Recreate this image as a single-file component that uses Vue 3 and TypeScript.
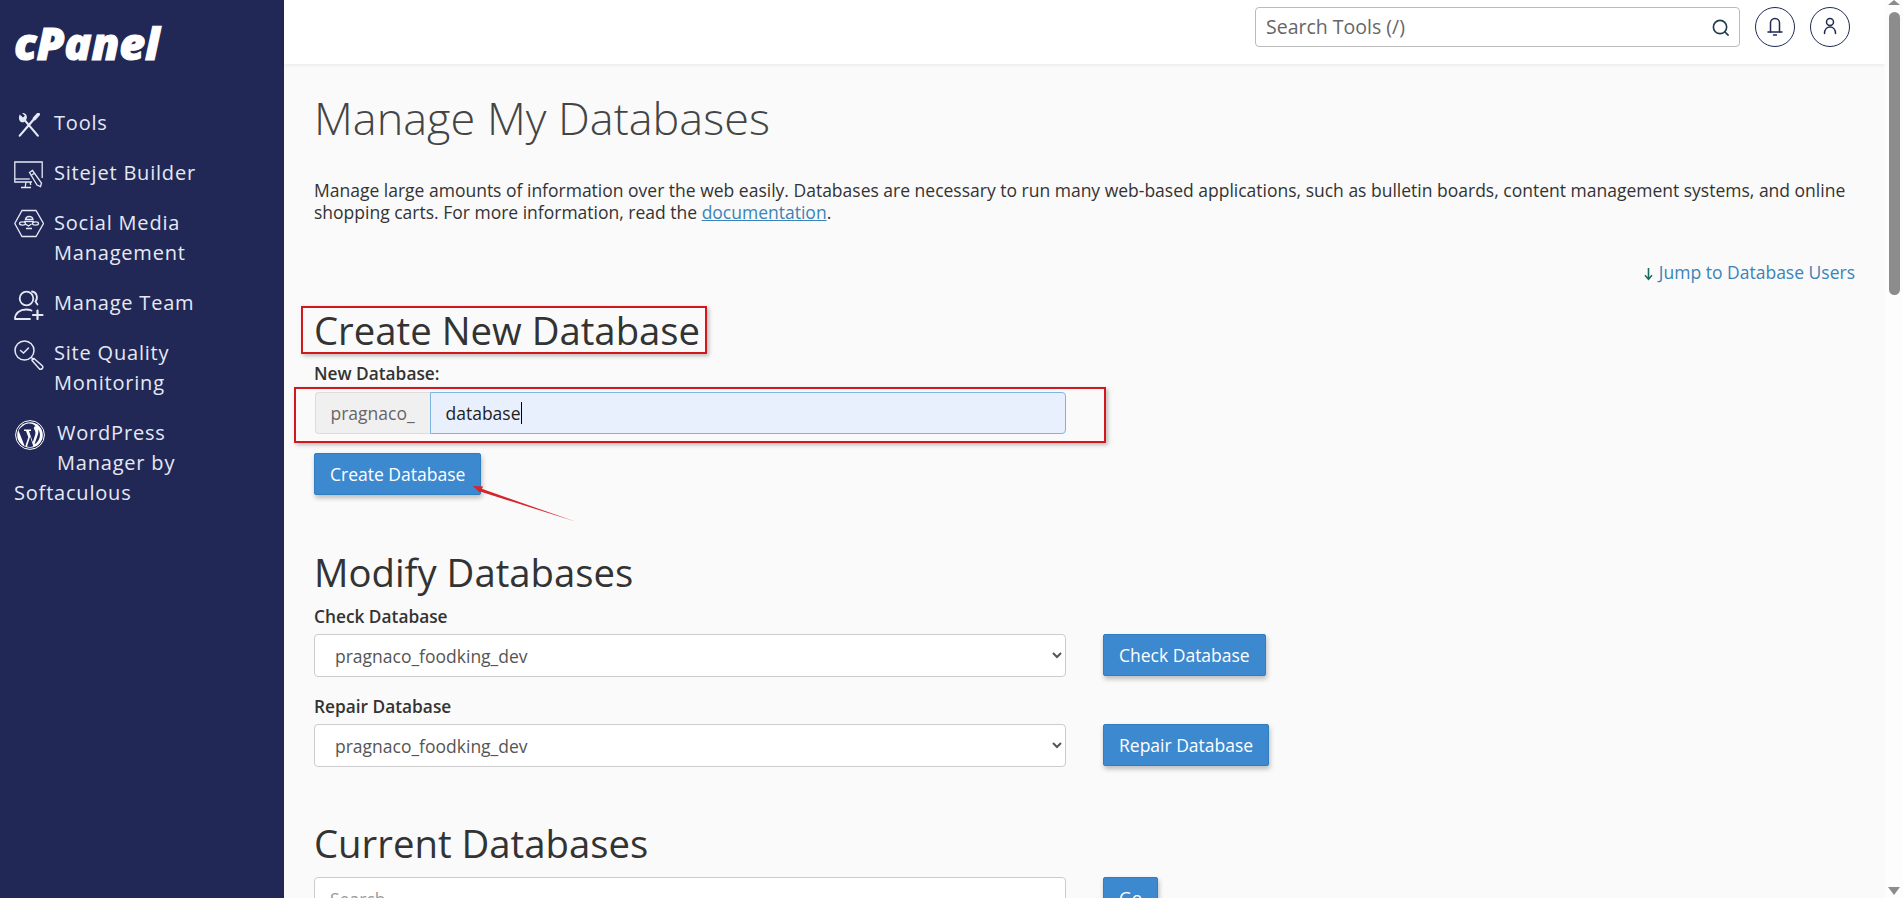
<script setup lang="ts">
interface NavItem {
  id: string
  label: string
}

const navItems: NavItem[] = [
  { id: 'tools', label: 'Tools' },
  { id: 'sitejet', label: 'Sitejet Builder' },
  { id: 'social', label: 'Social Media Management' },
  { id: 'team', label: 'Manage Team' },
  { id: 'quality', label: 'Site Quality Monitoring' },
  { id: 'wp', label: 'WordPress Manager by Softaculous' },
]

const dbOptions = ['pragnaco_foodking_dev']
</script>

<template>
  <div class="page">
    <aside class="sidebar">
      <div class="logo">cPanel</div>
      <nav class="nav">
        <a v-for="item in navItems" :key="item.id" class="nav-item" :class="`nav-${item.id}`" href="#">
          <span class="nav-icon">
            <svg v-if="item.id === 'tools'" viewBox="4 3 23 26" fill="none" stroke="#e6e9f4" stroke-width="2.400" stroke-linecap="round">
              <path fill="#e6e9f4" stroke="none" d="M5.500 4.500 9 8l2-2-3-3c3-.5 6 2 5 6l-1 2-2 2c-4 1-7-3-4.500-8.500z" />
              <path d="M11 11 25 27.500" />
              <path d="M25.500 4.500 21.500 9" stroke-width="3.800" />
              <path d="M21 9.500 5.500 27.500" />
            </svg>
            <svg v-else-if="item.id === 'sitejet'" viewBox="0 0 30 30" fill="none" stroke="#e6e9f4" stroke-width="1.300">
              <path d="M18 21H.8V1h27.400v16" />
              <path d="M.8 18h15" />
              <path d="M12 21l-.8 5M7 26.500h10M16 21l.8 3" />
              <path d="M15.500 11.500l3-2 9 12.500-1 3.500-3.500-1.500z" />
              <path d="M17 14.500l3-2" />
            </svg>
            <svg v-else-if="item.id === 'social'" viewBox="0 0 30 30" fill="none" stroke="#e6e9f4" stroke-width="1.300">
              <path d="M8 1.500h14L29.500 14.500 22 27.500H8L.8 14.500z" />
              <path d="M11.500 10.500c.5-4 7-4 7.500 0z" />
              <path d="M10 12.500h10" />
              <ellipse cx="8.500" cy="14.500" rx="3" ry="1.600" />
              <ellipse cx="21.500" cy="14.500" rx="3" ry="1.600" />
              <path d="M11.500 15l3 2 3-2M12 19.500h6" />
            </svg>
            <svg v-else-if="item.id === 'team'" viewBox="0 0 30 30" fill="none" stroke="#e6e9f4" stroke-width="1.800" stroke-linecap="round">
              <circle cx="12.500" cy="8.500" r="6.800" />
              <path d="M18 1.500c4.500.5 6.500 6 3.500 10l2 3" />
              <path d="M1 29c0-6 5-9.500 11-9.500 2 0 4 .3 5.500 1M1 29h15" />
              <path d="M23.500 20.500v8.500M19 25h9.500" stroke-width="2.200" />
            </svg>
            <svg v-else-if="item.id === 'quality'" viewBox="0 0 30 30" fill="none" stroke="#e6e9f4" stroke-width="1.500" stroke-linecap="round">
              <circle cx="10.500" cy="10.500" r="9.500" />
              <path d="M6.500 10.500l3 2.500 5-5" />
              <path d="M17.500 17.500l2 2" />
              <path d="M20 18.500l8.500 7.500a2.200 2.200 0 0 1-3 3l-7.500-8.500a2 2 0 0 1 2-2z" />
            </svg>
            <svg v-else viewBox="0 0 30 30">
              <circle cx="15" cy="15" r="14.400" fill="none" stroke="#fff" stroke-width="1" />
              <circle cx="15" cy="15" r="12.800" fill="#fff" />
              <path fill="#21285a" d="M3.500 10.500 10 27l3.300-9.800-2.300-6.300H9V9.500h7v1.400h-2l3.800 11.300 2.500-8c.7-2.400-.8-4.300-1.300-5.400-.4-1 .2-2.400 1.600-2.500C18.800 3.500 13 2 8.500 5.500 6 7.200 4.600 9 3.500 10.500z" />
              <path fill="#21285a" d="M15.200 16.500 12 26.500c1.900.6 4.300.6 6.300-.2zM23.300 9.500c.6 3.500-1 6.500-1.800 9l-2 5.800C24 21.800 27 15 23.300 9.500z" />
            </svg>
          </span>
          <span class="nav-label">{{ item.label }}</span>
        </a>
      </nav>
    </aside>

    <div class="main">
      <header class="topbar">
        <div class="search">
          <span class="search-text">Search Tools (/)</span>
          <svg class="search-icon" viewBox="0 0 20 20" fill="none" stroke="#1f3a4d" stroke-width="1.700" stroke-linecap="round">
            <circle cx="9.500" cy="9.500" r="7" />
            <path d="M14.500 14.500l3.500 3.500" />
          </svg>
        </div>
        <button class="round-btn" type="button" aria-label="Notifications">
          <svg viewBox="0 0 20 20" fill="none" stroke="#1f2a55" stroke-width="1.500" stroke-linecap="round">
            <path d="M5.500 15V6a4.500 4.500 0 0 1 9 0v9" />
            <path d="M3 15h14M8.500 18h3" />
          </svg>
        </button>
        <button class="round-btn" type="button" aria-label="Account">
          <svg viewBox="0 0 20 20" fill="none" stroke="#1f2a55" stroke-width="1.500" stroke-linecap="round">
            <circle cx="10" cy="5" r="3.500" />
            <path d="M4.500 16.500c0-4 2.500-6.500 5.500-6.500s5.500 2.500 5.500 6.500" />
          </svg>
        </button>
      </header>

      <main class="content">
        <h1 class="page-title">Manage My Databases</h1>
        <p class="intro">
          Manage large amounts of information over the web easily. Databases are necessary to run many web-based applications, such as bulletin boards, content management systems, and online shopping carts. For more information, read the
          <a href="#" class="doc-link">documentation</a>.
        </p>
        <div class="jump-row">
          <a href="#" class="jump-link">
            <svg class="jump-arrow" viewBox="0 0 12 16" fill="none" stroke="#1c6b62" stroke-width="1.800">
              <path d="M6 1v13M2 9.500 6 14l4-4.500" />
            </svg>
            Jump to Database Users
          </a>
        </div>

        <section class="create">
          <h2 class="section-title create-title"><span class="mark-title">Create New Database</span></h2>
          <label class="field-label">New Database:</label>
          <div class="mark-group">
            <div class="input-group">
              <span class="addon">pragnaco_</span>
              <div class="db-input"><span>database</span><i class="caret" /></div>
            </div>
          </div>
          <div class="arrow-wrap">
            <button class="btn" type="button">Create Database</button>
            <svg class="red-arrow" viewBox="0 0 110 40" fill="none">
              <path d="M9 3.500 8 6.500l101 32z" fill="#d8232a" />
              <path d="M1 1l11 .5-3.500 6.500z" fill="#d8232a" />
            </svg>
          </div>
        </section>

        <section class="modify">
          <h2 class="section-title">Modify Databases</h2>
          <label class="field-label check-label">Check Database</label>
          <div class="select-row">
            <select class="select">
              <option v-for="o in dbOptions" :key="o">{{ o }}</option>
            </select>
            <button class="btn" type="button">Check Database</button>
          </div>
          <label class="field-label repair-label">Repair Database</label>
          <div class="select-row">
            <select class="select">
              <option v-for="o in dbOptions" :key="o">{{ o }}</option>
            </select>
            <button class="btn" type="button">Repair Database</button>
          </div>
        </section>

        <section class="current">
          <h2 class="section-title">Current Databases</h2>
          <div class="select-row">
            <input class="search-db" type="text" placeholder="Search">
            <button class="btn" type="button">Go</button>
          </div>
        </section>
      </main>
    </div>

    <div class="scrollbar">
      <span class="arrow-up" />
      <span class="thumb" />
      <span class="arrow-down" />
    </div>
  </div>
</template>

<style>
html,
body {
  margin: 0;
  height: 100%;
  overflow: hidden;
}
</style>

<style scoped>
.page {
  display: flex;
  height: 898px;
  overflow: hidden;
  font-family: 'Open Sans', 'Liberation Sans', sans-serif;
  color: #333;
  background: #fafafa;
}

.sidebar {
  flex: 0 0 284px;
  padding: 0 40px 0 14px;
  box-sizing: border-box;
  background: #212856;
}

.logo {
  height: 44px;
  margin-top: 21px;
  font: italic 800 45px/44px 'Open Sans', sans-serif;
  letter-spacing: -0.200px;
  color: #fff;
  -webkit-text-stroke: 1px #fff;
}

.nav {
  display: flex;
  flex-direction: column;
  gap: 20px;
  margin-top: 43px;
}

.nav-item {
  display: block;
  font-size: 20px;
  line-height: 30px;
  letter-spacing: 0.800px;
  color: #e6e9f4;
  text-decoration: none;
}

.nav-icon {
  float: left;
  width: 40px;
  height: 30px;
}

.nav-icon svg {
  display: block;
  width: 30px;
  height: 30px;
}

.nav-tools .nav-icon svg {
  width: 22px;
  height: 24px;
  margin: 5px 0 0 4px;
}

.nav-social .nav-icon,
.nav-quality .nav-icon {
  height: 60px;
}

.nav-wp .nav-icon {
  width: 43px;
  height: 54px;
}

.nav-wp .nav-icon svg {
  margin: 2px 0 0 1px;
}

.nav-quality .nav-icon svg,
.nav-team .nav-icon svg {
  margin-top: 2px;
}

.nav-sitejet .nav-icon svg {
  margin-top: 3px;
}

.nav-social .nav-icon svg {
  margin-top: 1px;
}

.main {
  flex: 1;
  min-width: 0;
  display: flex;
  flex-direction: column;
}

.topbar {
  position: relative;
  flex: 0 0 64px;
  display: flex;
  align-items: flex-start;
  padding: 7px 35px 0 0;
  box-sizing: border-box;
  justify-content: flex-end;
  background: #fff;
  box-shadow: 0 1px 4px rgba(0, 0, 0, 0.08);
}

.search {
  width: 485px;
  height: 40px;
  box-sizing: border-box;
  display: flex;
  align-items: center;
  justify-content: space-between;
  padding: 0 9px 2px 10px;
  margin-right: 15px;
  border: 1px solid #bbb;
  border-radius: 4px;
}

.search-text {
  font-size: 19.500px;
  color: #666;
}

.search-icon {
  width: 19px;
  height: 19px;
  margin-top: 2px;
}

.round-btn {
  width: 40px;
  height: 40px;
  margin-left: 15px;
  padding: 9px;
  box-sizing: border-box;
  border: 1px solid #1f2a55;
  border-radius: 50%;
  background: #fff;
}

.round-btn:first-of-type {
  margin-left: 0;
}

.round-btn svg {
  display: block;
  width: 20px;
  height: 20px;
}

.content {
  flex: 1;
  padding: 0 30px;
  overflow: hidden;
}

.page-title {
  margin: 26px 0 0;
  font-size: 45px;
  font-weight: 300;
  line-height: 56px;
  color: #444;
}

.intro {
  margin: 33px 0 0;
  font-size: 17.500px;
  line-height: 22px;
  color: #333;
}

.doc-link,
.jump-link {
  color: #3b83b8;
}

.jump-row {
  margin-top: 37px;
  display: flex;
  justify-content: flex-end;
}

.jump-link {
  display: flex;
  align-items: center;
  gap: 5px;
  font-size: 17.500px;
  line-height: 24px;
  text-decoration: none;
}

.jump-arrow {
  width: 11px;
  height: 14px;
  margin-top: 3px;
}

.create {
  margin-top: 20px;
}

.section-title {
  margin: 0;
  font-size: 38.300px;
  font-weight: 400;
  line-height: 48px;
  color: #333;
}

.create-title {
  display: flex;
  height: 52px;
  align-items: center;
}

.mark-title {
  margin-left: -13px;
  padding: 0 5px 0 11px;
  line-height: 44px;
  border: 2.500px solid #d2171f;
  box-shadow: 2px 2px 4px rgba(0, 0, 0, 0.25);
}

.field-label {
  display: block;
  margin-top: 6px;
  font-size: 17.300px;
  font-weight: 600;
  line-height: 24px;
  color: #333;
}

.mark-group {
  width: 812px;
  height: 56px;
  margin: 1px 0 0 -20px;
  padding: 3px 0 0 18.500px;
  box-sizing: border-box;
  border: 2.500px solid #d2171f;
  box-shadow: 2px 2px 4px rgba(0, 0, 0, 0.25);
}

.input-group {
  display: flex;
  width: 751px;
  height: 42px;
}

.addon {
  flex: 0 0 115px;
  box-sizing: border-box;
  padding-left: 15px;
  border: 1px solid #ddd;
  border-right: 0;
  border-radius: 4px 0 0 4px;
  font-size: 17.500px;
  line-height: 40px;
  color: #666;
  background: #f0f0f0;
}

.db-input {
  flex: 1;
  display: flex;
  align-items: center;
  padding-left: 15px;
  border: 1px solid #7db5e0;
  border-radius: 0 4px 4px 0;
  font-size: 17.500px;
  color: #222;
  background: #e8f0fe;
}

.caret {
  width: 1px;
  height: 22px;
  background: #000;
}

.arrow-wrap {
  position: relative;
  margin-top: 10px;
}

.red-arrow {
  position: absolute;
  left: 157px;
  top: 32px;
  width: 106px;
  height: 38px;
  overflow: visible;
}

.btn {
  height: 42px;
  padding: 0 15px;
  border: 1px solid #2f7fc0;
  border-radius: 2px;
  font-family: inherit;
  font-size: 17.500px;
  color: #fff;
  background: #3c89cf;
  box-shadow: 1px 3px 5px rgba(0, 0, 0, 0.25);
}

.modify {
  margin-top: 53px;
}

.check-label {
  margin-top: 9px;
}

.repair-label {
  margin-top: 18px;
}

.select-row {
  display: flex;
  align-items: flex-start;
  gap: 37px;
  margin-top: 5px;
}

.select {
  width: 752px;
  height: 43px;
  box-sizing: border-box;
  padding-left: 16px;
  border: 1px solid #ccc;
  border-radius: 4px;
  font-family: inherit;
  font-size: 17.500px;
  color: #555;
  background: #fff;
}

.current {
  margin-top: 52px;
}

.current .select-row {
  margin-top: 10px;
}

.search-db {
  width: 752px;
  height: 43px;
  box-sizing: border-box;
  padding-left: 15px;
  border: 1px solid #ccc;
  border-radius: 4px;
  font-family: inherit;
  font-size: 17.500px;
  background: #fff;
}

.search-db::placeholder {
  color: #999;
}

.scrollbar {
  position: relative;
  flex: 0 0 18px;
  background: #fdfdfd;
}

.thumb {
  position: absolute;
  top: 12px;
  left: 4px;
  width: 11px;
  height: 283px;
  border-radius: 6px;
  background: #8c8c8c;
}

.arrow-up,
.arrow-down {
  position: absolute;
  left: 3px;
  width: 0;
  height: 0;
  border-left: 6.500px solid transparent;
  border-right: 6.500px solid transparent;
}

.arrow-up {
  top: 0;
  border-bottom: 5px solid #8c8c8c;
}

.arrow-down {
  bottom: 3px;
  border-top: 8px solid #8c8c8c;
}
</style>
